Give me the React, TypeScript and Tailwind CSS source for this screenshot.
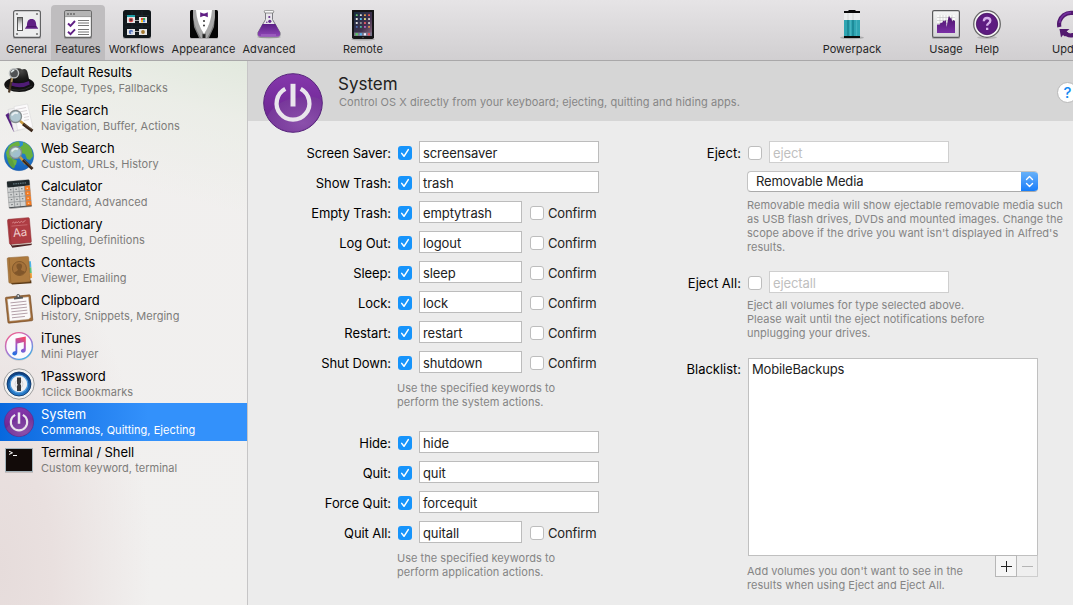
import React, { ReactNode } from "react";

const uiFont = "font-['Inter','Liberation_Sans',sans-serif]";

/* ---------- toolbar icons (28 x 28) ---------- */

const GeneralIcon = () => (
  <svg width="28" height="30" viewBox="0 0 28 30">
    <defs>
      <linearGradient id="gSwitch" x1="0" y1="0" x2="0" y2="1">
        <stop offset="0" stopColor="#777" />
        <stop offset="0.5" stopColor="#ddd" />
        <stop offset="1" stopColor="#fff" />
      </linearGradient>
    </defs>
    <rect x="0" y="26" width="28" height="3" rx="1.5" fill="#000" opacity="0.18" />
    <rect x="0.6" y="0.6" width="26.8" height="26.8" rx="2" fill="#ededee" stroke="#5c5c5e" strokeWidth="1.1" />
    <g fill="#777">
      <circle cx="4" cy="4" r="1.1" />
      <circle cx="24" cy="4" r="1.1" />
      <circle cx="4" cy="24" r="1.1" />
      <circle cx="24" cy="24" r="1.1" />
    </g>
    <rect x="4.5" y="7.5" width="5" height="13" fill="url(#gSwitch)" stroke="#555" />
    <path d="M12 18.8c0-1.5 1.7-1.3 1.9-3 .2-4.5 1.2-6.8 4.7-6.8s4.5 2.3 4.7 6.8c.2 1.7 1.9 1.500 1.9 3z" fill="#602084" />
    <rect x="13.6" y="16" width="9.8" height="1.1" fill="#4b1569" />
  </svg>
);

const FeaturesIcon = () => (
  <svg width="28" height="30" viewBox="0 0 28 30">
    <rect x="0" y="26" width="28" height="3" rx="1.5" fill="#000" opacity="0.18" />
    <rect x="0.6" y="0.6" width="26.8" height="26.8" rx="2" fill="#fff" stroke="#666" strokeWidth="1.1" />
    <path d="M1 6.5V2.5Q1 1 2.5 1h23Q27 1 27 2.5v4z" fill="#b5b5b5" />
    <path d="M1 6.6h26" stroke="#888" strokeWidth="0.8" />
    <g fill="#6a6a6a">
      <circle cx="4" cy="4" r="1" />
      <circle cx="7" cy="4" r="1" />
      <circle cx="10" cy="4" r="1" />
    </g>
    <path d="M4 13.5l2.5 2.3L11 11M4 21.8l2.5 2.3L11 19.3" fill="none" stroke="#602084" strokeWidth="1.9" />
    <path d="M14 10.500h11M14 13h11M14 15.500h11M14 19.500h11M14 22h11M14 24.500h11" stroke="#666" strokeWidth="0.9" />
  </svg>
);

const WorkflowsIcon = () => (
  <svg width="28" height="30" viewBox="0 0 28 30">
    <rect x="0" y="26" width="28" height="3" rx="1.5" fill="#000" opacity="0.18" />
    <rect x="0" y="0" width="28" height="28" rx="2.5" fill="#11171b" />
    <path d="M2 5.5h24M2 9h24M2 13h24M2 17h24M2 24h24M9 1v26M19 1v26" stroke="#263239" strokeWidth="0.5" />
    <path d="M12 10.5h4M12 21.5h4" stroke="#aaa" />
    <rect x="4" y="5" width="8" height="2" fill="#1e9da7" />
    <rect x="4" y="7" width="8" height="6" fill="#e6e6e6" />
    <rect x="16" y="7" width="8" height="6" fill="#e6e6e6" />
    <rect x="4" y="19" width="8" height="6" fill="#e6e6e6" />
    <rect x="16" y="19" width="8" height="6" fill="#e6e6e6" />
    <circle cx="8" cy="10" r="2.3" fill="#d24b4e" />
    <circle cx="8" cy="10" r="0.9" fill="#333" />
    <path d="M18 8h2v2.200h-2z" fill="#e94335" />
    <path d="M20 8h2.200v2.200H20z" fill="#34a853" />
    <path d="M18 10.200h2v2h-2z" fill="#fbbc05" />
    <path d="M20 10.200h2.200v2H20z" fill="#4285f4" />
    <circle cx="8" cy="22" r="2.2" fill="#5876ba" />
    <circle cx="9" cy="22.700" r="1.2" fill="#c8d3ec" />
    <circle cx="20" cy="22" r="1.9" fill="#a47a32" />
  </svg>
);

const AppearanceIcon = () => (
  <svg width="28" height="30" viewBox="0 0 28 30">
    <rect x="0" y="26" width="28" height="3" rx="1.5" fill="#000" opacity="0.18" />
    <rect width="28" height="28" rx="1.5" fill="#050505" />
    <path d="M4 0h20l1 6-1 11-5 11h-4l-1-5-1 5H9L4 17 3 6z" fill="#7b7b7b" />
    <path d="M3 0h4q0 14 7 24l-.5 4H11Q2 14 3 0zM25 0h-4q0 14-7 24l.5 4H17Q26 14 25 0z" fill="#a8a8a8" />
    <path d="M6 0h16q-1 14-8 24Q7 14 6 0z" fill="#fff" />
    <path d="M12.5 23.500l1.5 1 1.5-1v4.500h-3z" fill="#222" />
    <path d="M10.200 2.300l3 1.300h1.600l3-1.300v5l-3-1.300h-1.600l-3 1.300z" fill="#602084" />
    <circle cx="14" cy="11" r="0.9" fill="#222" />
    <circle cx="14" cy="15.500" r="0.9" fill="#222" />
  </svg>
);

const AdvancedIcon = () => (
  <svg width="28" height="30" viewBox="0 0 28 30">
    <defs>
      <linearGradient id="gFlask" x1="0" y1="0" x2="0" y2="1">
        <stop offset="0" stopColor="#5b1f86" />
        <stop offset="1" stopColor="#9148b8" />
      </linearGradient>
    </defs>
    <ellipse cx="14" cy="27" rx="12" ry="1.5" fill="#000" opacity="0.18" />
    <path d="M10.500 1.500v8L3 22.500Q2 27 6 27h16q4 0 3-4.500L17.500 9.500v-8z" fill="#e9e7ec" stroke="#7d7d82" strokeWidth="1" />
    <path d="M7.600 14h12.800l4.600 8.500q.8 4.300-3 4.300H6q-3.800 0-3-4.300z" fill="url(#gFlask)" />
    <rect x="9.3" y="0.3" width="9.4" height="2.7" rx="1.3" fill="#f5f5f5" stroke="#777" strokeWidth="0.8" />
    <circle cx="14.3" cy="7" r="1.1" fill="#66308d" />
    <circle cx="14.8" cy="11.3" r="1.6" fill="#66308d" />
    <circle cx="11.8" cy="12.3" r="0.8" fill="#66308d" />
    <path d="M6 25h15" stroke="#b581d3" strokeWidth="0.8" />
  </svg>
);

const tabletApps = ["#68c96b", "#e2e2e2", "#e9a34b", "#ef5c54", "#e6e6e6", "#56b9ef", "#e0dc7a", "#ccc", "#ddd", "#8b8c92", "#ea5a68", "#c9c9c9", "#4d6fb3", "#49c3a4", "#c56ad1", "#e8944c"];

const RemoteIcon = () => (
  <svg width="28" height="31" viewBox="0 0 28 31">
    <defs>
      <linearGradient id="gTablet" x1="0" y1="0" x2="1" y2="1">
        <stop offset="0" stopColor="#152a40" />
        <stop offset="0.6" stopColor="#42324f" />
        <stop offset="1" stopColor="#8d6c80" />
      </linearGradient>
    </defs>
    <ellipse cx="14" cy="29.300" rx="12" ry="1.3" fill="#000" opacity="0.2" />
    <rect x="3" y="-1" width="22" height="30" rx="1.8" fill="#151517" />
    <rect x="5" y="2" width="18" height="24" fill="url(#gTablet)" />
    {tabletApps.map((c, i) => (
      <rect key={i} x={6.8 + (i % 4) * 4.1} y={4.2 + Math.floor(i / 4) * 3.9} width="1.9" height="1.9" rx="0.5" fill={c} />
    ))}
    <rect x="5" y="22.500" width="18" height="3.500" fill="#77748a" />
    <rect x="6.600" y="23.200" width="2.2" height="2.2" fill="#56d05c" />
    <rect x="10.700" y="23.200" width="2.2" height="2.2" fill="#4fb0f2" />
    <rect x="14.800" y="23.200" width="2.2" height="2.2" fill="#eef" />
    <rect x="18.900" y="23.200" width="2.2" height="2.2" fill="#ee4d58" />
    <circle cx="14" cy="27.500" r="0.8" fill="#555" />
  </svg>
);

const PowerpackIcon = () => (
  <svg width="28" height="30" viewBox="0 0 28 30">
    <ellipse cx="14" cy="27.700" rx="12" ry="1.6" fill="#000" opacity="0.2" />
    <path d="M10.500 0h7v1H22V3H6V1h4.500z" fill="#0b0b0b" />
    <rect x="6" y="3" width="16" height="7" fill="#eceeee" />
    <path d="M10 3v7M15 3v7" stroke="#dcdedd" strokeWidth="1.5" />
    <rect x="6" y="10" width="16" height="16" fill="#2fa5b2" />
    <path d="M10 10v16M15 10v16" stroke="#188391" strokeWidth="1.5" />
    <path d="M12.500 10v16M18.500 10v16" stroke="#46b3bf" strokeWidth="1.2" />
    <path d="M6 26h16v2H6z" fill="#0b0b0b" />
  </svg>
);

const UsageIcon = () => (
  <svg width="28" height="30" viewBox="0 0 28 30">
    <defs>
      <linearGradient id="gUsage" x1="0" y1="0" x2="0" y2="1">
        <stop offset="0" stopColor="#f5f5f5" />
        <stop offset="1" stopColor="#d5d5d7" />
      </linearGradient>
      <linearGradient id="gChart" x1="0" y1="0" x2="0" y2="1">
        <stop offset="0" stopColor="#4a1269" />
        <stop offset="1" stopColor="#7a2fa5" />
      </linearGradient>
    </defs>
    <rect x="0" y="26" width="28" height="3" rx="1.5" fill="#000" opacity="0.18" />
    <rect x="0.6" y="0.6" width="26.800" height="26.800" rx="1.5" fill="url(#gUsage)" stroke="#5a5a5c" strokeWidth="1.200" />
    <rect x="5" y="5" width="18" height="18" rx="1" fill="#fafafa" />
    <path d="M5 7.500h18M5 10.500h18M5 13.500h18M8 5v9M11 5v9M14 5v9M17 5v9M20 5v9" stroke="#b5b5b5" strokeWidth="0.500" />
    <path d="M5 15l1-1 1 1 2-2.500 1 .5 1.500-2.500 1 1 .5-1.500 1 1 .7 6 .8-5 1-5 .7-1 1 2.500 1-1 1 4 1-1.500 1.800 1V23H5z" fill="url(#gChart)" />
  </svg>
);

const HelpIcon = () => (
  <svg width="28" height="30" viewBox="0 0 28 30">
    <ellipse cx="14" cy="27.500" rx="10" ry="1.500" fill="#000" opacity="0.15" />
    <circle cx="14" cy="14" r="13.300" fill="#f5f5f5" stroke="#666" strokeWidth="1.300" />
    <circle cx="14" cy="14" r="10.700" fill="#5d1c80" stroke="#451060" strokeWidth="0.800" />
    <path d="M10.800 11.200q.2-3.200 3.300-3.200 3.200 0 3.200 2.800 0 1.500-1.700 2.600-1.500 1-1.500 2.400" fill="none" stroke="#d6b2ea" strokeWidth="2.300" />
    <rect x="13" y="17.700" width="2.300" height="2.300" fill="#d6b2ea" />
  </svg>
);

const UpdateIcon = () => (
  <svg width="28" height="30" viewBox="0 0 28 30">
    <path d="M2.400 17A12 12 0 0 1 2.400 11.500 12 12 0 0 1 14 2.800a12 12 0 0 1 9 4" fill="none" stroke="#52196f" strokeWidth="4.200" />
    <path d="M24 11A12 12 0 0 1 14 25.500a12 12 0 0 1-7.500-3.500" fill="none" stroke="#52196f" strokeWidth="4.200" />
    <path d="M2.500 19h10L9.500 21.500l2 1.500-3.500 3.500L6 25l-2 2.500z" fill="#52196f" />
    <path d="M25 9.500h-8.500L22.500 2z" fill="#52196f" />
    <path d="M2.500 13A11.500 11.500 0 0 1 14 2.500" fill="none" stroke="#7531a0" strokeWidth="1.600" />
  </svg>
);

/* ---------- sidebar icons (32 x 32) ---------- */

const Lens = ({ x, y, r }: { x: number; y: number; r: number }) => (
  <g>
    <path d={`M${x + r * 0.7} ${y + r * 0.7}L23 24`} stroke="#c99a3f" strokeWidth="2.6" />
    <path d={`M${x + r + 1.5} ${y + r + 1.5}L29.5 29`} stroke="#38251a" strokeWidth="3" />
    <path d={`M${x + r + 2} ${y + r + 1}L29.5 27.800`} stroke="#80654a" strokeWidth="0.7" />
    <circle cx={x} cy={y} r={r} fill="#abc4ce" fillOpacity="0.92" stroke="#848c8f" strokeWidth="1.3" />
    <path d={`M${x - r * 0.6} ${y - 1}a${r * 0.7} ${r * 0.7} 0 0 1 ${r} ${-r * 0.35}`} stroke="#fff" strokeWidth="2" fill="none" opacity="0.7" />
  </g>
);

const HatIcon = () => (
  <svg width="32" height="32" viewBox="0 0 32 32">
    <defs>
      <radialGradient id="gHat" cx="0.55" cy="0.15" r="0.8">
        <stop offset="0" stopColor="#4a4a48" />
        <stop offset="0.5" stopColor="#1e1e1d" />
        <stop offset="1" stopColor="#080808" />
      </radialGradient>
    </defs>
    <ellipse cx="16.300" cy="20.500" rx="15" ry="7.500" fill="#121212" />
    <path d="M7.500 20Q7.500 6 12 5q4-1.500 7 .5 5-2 6 5l2 9.500q-9 5-19.500 0z" fill="url(#gHat)" />
    <path d="M8 18q9 3 18-1l.8 3.500q-9 5-18.800 1z" fill="#4f1c75" />
    <path d="M3 23q13 7 26-1" stroke="#333" fill="none" strokeWidth="0.800" />
    <path d="M9 14L6 28.500" stroke="#4b3826" strokeWidth="2.200" />
    <path d="M9.300 14L8.500 18" stroke="#a98d5c" strokeWidth="1.800" />
    <circle cx="11" cy="9.300" r="4.600" fill="#4f5254" stroke="#bfc3c3" strokeWidth="1.400" />
    <path d="M8.300 8.300a4 4 0 0 1 3-2" stroke="#e5eeee" strokeWidth="1.400" fill="none" />
  </svg>
);

const FileSearchIcon = () => (
  <svg width="32" height="32" viewBox="0 0 32 32">
    <path d="M2.500 13l4-3 9 18-5 1.500z" fill="#552080" />
    <path d="M5 7.500l16-3.500 4 22-14 3.500z" fill="#f1f0f1" stroke="#d5d5d5" strokeWidth="0.600" />
    <path d="M11 4.500l13.500-2.500L29.800 25l-15.300 3z" fill="#fbfafb" stroke="#dadada" strokeWidth="0.600" />
    <path d="M13 7.500l10-2M13.500 10.500l10.500-2M20 12.500l5-1M21 15.500l5-1M21 18.500l5-1" stroke="#d2cccf" strokeWidth="0.800" />
    <Lens x={12.5} y={14.5} r={6} />
  </svg>
);

const WebSearchIcon = () => (
  <svg width="32" height="32" viewBox="0 0 32 32">
    <defs>
      <linearGradient id="gSea" x1="0" y1="0" x2="0" y2="1">
        <stop offset="0" stopColor="#2f95cf" />
        <stop offset="1" stopColor="#1560bd" />
      </linearGradient>
    </defs>
    <circle cx="16" cy="16" r="14.700" fill="url(#gSea)" stroke="#2661a3" strokeWidth="0.500" />
    <path d="M6 6q5-4.500 10-4.500l1 4-4 2 2 3-5 3-1 5 5 2-1 4-3 3-3-5-3-5-1-5z" fill="#6bb13f" />
    <path d="M20 2q6 2 8.500 7l1.500 7-3 4-3-1-2-5-5-1-1-5 4-3z" fill="#69b03e" />
    <path d="M4 17l5 2 3 8-2 1.500Q5 25 4 17z" fill="#5ca03d" />
    <Lens x={12.5} y={12.5} r={6} />
  </svg>
);

const CalculatorIcon = () => (
  <svg width="32" height="32" viewBox="0 0 32 32">
    <path d="M7 30l20-2 2-2v2.500l-21 2.500z" fill="#000" opacity="0.2" />
    <g transform="rotate(-5 16 16)">
      <rect x="5" y="2.500" width="22.500" height="27" rx="1" fill="#d0d2d2" stroke="#777" strokeWidth="0.400" />
      <rect x="5" y="2.500" width="22.500" height="6" rx="1" fill="#20282b" />
      <path d="M11 5.500h13" stroke="#5d7178" strokeWidth="1.400" strokeDasharray="1.500 0.800" />
      <rect x="22" y="8.500" width="5.500" height="20.500" fill="#f47a20" />
      <path d="M5 13.500h22.500M5 18.500h22.500M5 23.500h22.500M10.700 8.500v20.500M16.400 8.500v20.500M22 8.500v20.500" stroke="#8d9193" strokeWidth="0.700" />
      <path d="M5 28.800h22.500" stroke="#494d50" />
      <path d="M7.300 11h1.500M12.800 11h1.500M18.500 11H20M7.300 16h1.500M12.800 16h1.500M18.500 16H20M7.300 21h1.500M12.800 21h1.500M18.500 21H20M7.300 26h1.500M12.800 26h1.500" stroke="#6b7073" />
      <path d="M24 11h1.500M24 16h1.500M24 21h1.500M24 26h1.500" stroke="#ffd8b7" />
    </g>
  </svg>
);

const DictionaryIcon = () => (
  <svg width="32" height="32" viewBox="0 0 32 32">
    <g transform="rotate(-5 16 16)">
      <path d="M6 27l21.500 1v2L8 31z" fill="#4b2424" />
      <path d="M7 27.300h20.500v1.500H8z" fill="#d8cfc4" />
      <rect x="5.500" y="2.500" width="22" height="25" rx="1.200" fill="#ae3c43" stroke="#8d2c31" strokeWidth="0.500" />
      <path d="M7 2.500v25" stroke="#993036" strokeWidth="0.800" />
      <path d="M9 9.500h16" stroke="#d67f82" strokeWidth="0.600" />
      <path d="M10 6.500l1.500-1 1 1.500 1.500-1.500 1 1.300 1.500-1.300 1 1.300 2-1.300 1 1.300 3-1.800" stroke="#e3a0a1" strokeWidth="0.700" fill="none" />
      <text x="17" y="20.500" textAnchor="middle" fontSize="11.500" fill="#f0cccb" className={uiFont}>Aa</text>
    </g>
  </svg>
);

const ContactsIcon = () => (
  <svg width="32" height="32" viewBox="0 0 32 32">
    <g transform="rotate(-4 16 16)">
      <path d="M26 8h2.500v6H26z" fill="#4eb4e8" />
      <path d="M26 14h2.500v6H26z" fill="#5cc47c" />
      <path d="M26 20h2.500v5H26z" fill="#f2a13b" />
      <path d="M6 27h21.500v3H8z" fill="#573613" />
      <rect x="5" y="3" width="21.500" height="25.500" rx="1.200" fill="#ad7a3e" stroke="#8f6430" strokeWidth="0.500" />
      <path d="M7 3v25" stroke="#96672f" strokeWidth="0.800" />
      <circle cx="16.500" cy="14.500" r="7" fill="#a4713a" stroke="#80562a" strokeWidth="0.900" />
      <path d="M16.500 9.500q3 0 2.800 3-.3 2-1.300 2.800 0 1.200 1.500 1.700 2 .5 2.500 1.700-2.300 2.500-5.500 2.500t-5.500-2.500q.5-1.200 2.500-1.700 1.500-.5 1.500-1.700-1-.8-1.300-2.800-.2-3 2.800-3z" fill="#80562a" />
    </g>
  </svg>
);

const ClipboardIcon = () => (
  <svg width="32" height="32" viewBox="0 0 32 32">
    <g transform="rotate(-6 16 16)">
      <rect x="3.500" y="4" width="25" height="26" rx="1" fill="#a16d3a" stroke="#6f431d" strokeWidth="0.600" />
      <path d="M5.500 6h21v20.500l-2 1.500h-19z" fill="#fbf9f9" stroke="#ccc" strokeWidth="0.400" />
      <path d="M8 10h16M8 13h16M8 16h16M8 19h16M8 22h16M8 25h13" stroke="#a58f99" strokeWidth="0.800" />
      <path d="M12 7V5h2.500q0-3 2-3t2 3H21v2z" fill="#55585a" />
      <circle cx="16.500" cy="4" r="0.900" fill="#ddd" />
    </g>
  </svg>
);

const ITunesIcon = () => (
  <svg width="32" height="32" viewBox="0 0 32 32">
    <defs>
      <linearGradient id="gRing" x1="0.2" y1="0" x2="0.8" y2="1">
        <stop offset="0" stopColor="#f1608e" />
        <stop offset="0.5" stopColor="#a873d7" />
        <stop offset="1" stopColor="#31b5e8" />
      </linearGradient>
      <linearGradient id="gNote" x1="0.7" y1="0" x2="0.4" y2="1">
        <stop offset="0" stopColor="#f54766" />
        <stop offset="0.55" stopColor="#9a55cc" />
        <stop offset="1" stopColor="#2870e0" />
      </linearGradient>
    </defs>
    <circle cx="16" cy="16.500" r="14.300" fill="#000" opacity="0.120" />
    <circle cx="16" cy="16" r="13.400" fill="#fbfafd" stroke="url(#gRing)" strokeWidth="1.400" />
    <path d="M12.500 8.500L22.800 6.400V19.600q0 3.200-3 3.200-2.200-.2-1.900-2.200.3-1.600 2.900-2V12l-6.500 1.400v8.800q0 3-3 3.200-2.300-.2-2-2.200.3-1.700 3.200-2.200z" fill="url(#gNote)" />
  </svg>
);

const OnePasswordIcon = () => (
  <svg width="32" height="32" viewBox="0 0 32 32">
    <defs>
      <linearGradient id="gLock" x1="0" y1="0" x2="0" y2="1">
        <stop offset="0" stopColor="#0b3e80" />
        <stop offset="1" stopColor="#277fce" />
      </linearGradient>
    </defs>
    <circle cx="16" cy="16" r="15.200" fill="#f2f2f2" stroke="#888" strokeWidth="0.800" />
    <circle cx="16" cy="16" r="12" fill="url(#gLock)" stroke="#082c5d" strokeWidth="0.800" />
    <circle cx="16" cy="16" r="8.800" fill="#f0f1f3" stroke="#4f9bdd" strokeWidth="1.200" />
    <circle cx="16" cy="16" r="4" fill="none" stroke="#ccc" strokeWidth="0.700" />
    <path d="M14 9.500h4v5.300l-.8 1.200.8 1v6h-4v-5l.8-1.200-.8-1z" fill="#39393b" />
  </svg>
);

const PowerIcon = ({ size }: { size: number }) => (
  <svg width={size} height={size} viewBox="0 0 60 60">
    <defs>
      <linearGradient id="gPower" x1="0" y1="0" x2="0" y2="1">
        <stop offset="0" stopColor="#8537ac" />
        <stop offset="1" stopColor="#65208a" />
      </linearGradient>
      <radialGradient id="gSheen" cx="0.65" cy="0.75" r="0.7">
        <stop offset="0" stopColor="#935bb2" />
        <stop offset="1" stopColor="#783b9a" />
      </radialGradient>
    </defs>
    <circle cx="30" cy="30" r="29.300" fill="url(#gPower)" stroke="#57267b" strokeWidth="1" />
    <path d="M4.500 43Q13 27 36 24.500T58.500 30A28.500 28.500 0 0 1 4.500 43z" fill="url(#gSheen)" opacity="0.8" />
    <path d="M22.300 15.800A16.400 16.400 0 1 0 37.700 15.800" fill="none" stroke="#e9e5ec" strokeWidth="4.300" />
    <path d="M30 10.800v22.700" stroke="#e9e5ec" strokeWidth="5" />
  </svg>
);

const TerminalIcon = () => (
  <svg width="32" height="32" viewBox="0 0 32 32">
    <rect x="2" y="5" width="28" height="24" fill="#000" opacity="0.15" />
    <rect x="2.500" y="4.500" width="27" height="23" fill="#120b09" stroke="#a4b4bb" strokeWidth="1" />
    <path d="M6 7.200l3.500 1.600L6 10.400M10 11.500h4" stroke="#fff" strokeWidth="1" fill="none" />
  </svg>
);

/* ---------- controls ---------- */

const Tool = ({ label, icon, className }: { label: string; icon: ReactNode; className: string }) => (
  <div className={`flex shrink-0 flex-col items-center pt-[5px] ${className}`}>
    <div className="h-[33px] shrink-0">{icon}</div>
    <div className="whitespace-nowrap text-[11px] leading-[13px] tracking-[0.05px] text-[#262626]">{label}</div>
  </div>
);

const Check = ({ on = false }: { on?: boolean }) =>
  on ? (
    <span className="flex size-[14px] shrink-0 items-center justify-center rounded-[3px] bg-[#1694fb]">
      <svg width="14" height="14" viewBox="0 0 14 14">
        <path d="M3.700 7.400l2.300 2.900L10.300 3.600" fill="none" stroke="#fff" strokeWidth="1.500" strokeLinecap="round" strokeLinejoin="round" />
      </svg>
    </span>
  ) : (
    <span className="size-[14px] shrink-0 rounded-[3px] border border-[#bdbdbd] bg-white" />
  );

const Label = ({ children, className }: { children: ReactNode; className: string }) => (
  <span className={`shrink-0 whitespace-nowrap text-right text-[13px] leading-[16px] text-black ${className}`}>{children}</span>
);

type Row = { label: string; value: string; confirm?: boolean };

const KeywordRow = ({ label, value, confirm }: Row) => (
  <div className="flex h-[22px] items-center">
    <Label className="w-[143px] pt-[2px] tracking-[-0.08px]">{label}</Label>
    <span className="ml-[7px] flex pt-px">
      <Check on />
    </span>
    <span className={`ml-[7px] flex h-[22px] items-center border border-[#bcbcbc] bg-white px-[3px] pt-[2px] text-[13px] leading-[16px] tracking-[-0.1px] text-[#222] ${confirm ? "w-[103px]" : "w-[180px]"}`}>{value}</span>
    {confirm && (
      <span className="ml-2 flex items-center gap-1 pt-px">
        <Check />
        <span className="text-[13px] leading-[16px] tracking-[-0.15px] text-[#222]">Confirm</span>
      </span>
    )}
  </div>
);

const EjectRow = ({ label, value }: Row) => (
  <div className="flex h-[22px] items-center">
    <Label className="w-[93px] pt-[2px] tracking-[0.03px]">{label}</Label>
    <span className="ml-[7px] flex pt-px">
      <Check />
    </span>
    <span className="ml-[7px] flex h-[22px] w-[180px] items-center border border-[#cfcfcf] bg-white px-[3px] pt-[2px] text-[13px] leading-[16px] tracking-[-0.1px] text-[#bfbfbf]">{value}</span>
  </div>
);

const Hint = ({ lines, className }: { lines: string[]; className: string }) => (
  <div className={`whitespace-nowrap text-[11px] leading-[14px] tracking-[0.03px] text-[#858585] ${className}`}>
    {lines.map((line) => (
      <div key={line}>{line}</div>
    ))}
  </div>
);

const features: { title: string; sub: string; icon: ReactNode; active?: boolean }[] = [
  { title: "Default Results", sub: "Scope, Types, Fallbacks", icon: <HatIcon /> },
  { title: "File Search", sub: "Navigation, Buffer, Actions", icon: <FileSearchIcon /> },
  { title: "Web Search", sub: "Custom, URLs, History", icon: <WebSearchIcon /> },
  { title: "Calculator", sub: "Standard, Advanced", icon: <CalculatorIcon /> },
  { title: "Dictionary", sub: "Spelling, Definitions", icon: <DictionaryIcon /> },
  { title: "Contacts", sub: "Viewer, Emailing", icon: <ContactsIcon /> },
  { title: "Clipboard", sub: "History, Snippets, Merging", icon: <ClipboardIcon /> },
  { title: "iTunes", sub: "Mini Player", icon: <ITunesIcon /> },
  { title: "1Password", sub: "1Click Bookmarks", icon: <OnePasswordIcon /> },
  { title: "System", sub: "Commands, Quitting, Ejecting", icon: <PowerIcon size={30} />, active: true },
  { title: "Terminal / Shell", sub: "Custom keyword, terminal", icon: <TerminalIcon /> },
];

const systemRows: Row[] = [
  { label: "Screen Saver:", value: "screensaver" },
  { label: "Show Trash:", value: "trash" },
  { label: "Empty Trash:", value: "emptytrash", confirm: true },
  { label: "Log Out:", value: "logout", confirm: true },
  { label: "Sleep:", value: "sleep", confirm: true },
  { label: "Lock:", value: "lock", confirm: true },
  { label: "Restart:", value: "restart", confirm: true },
  { label: "Shut Down:", value: "shutdown", confirm: true },
];

const appRows: Row[] = [
  { label: "Hide:", value: "hide" },
  { label: "Quit:", value: "quit" },
  { label: "Force Quit:", value: "forcequit" },
  { label: "Quit All:", value: "quitall", confirm: true },
];

export default function App() {
  return (
    <div className={`flex h-[605px] w-[1073px] flex-col overflow-hidden bg-[#ececec] ${uiFont}`}>
      <header className="flex h-[61px] shrink-0 overflow-hidden border-b border-[#a9a8a9] bg-linear-to-b from-[#e6e4e6] to-[#d1cfd1] pt-[5px]">
        <Tool label="General" icon={<GeneralIcon />} className="w-[51px] pl-[2px]" />
        <Tool label="Features" icon={<FeaturesIcon />} className="w-[54px] rounded-t-[4px] bg-[#bfbdbf]" />
        <Tool label="Workflows" icon={<WorkflowsIcon />} className="w-[63px]" />
        <Tool label="Appearance" icon={<AppearanceIcon />} className="w-[71px]" />
        <Tool label="Advanced" icon={<AdvancedIcon />} className="w-[60px]" />
        <Tool label="Remote" icon={<RemoteIcon />} className="ml-[40px] w-[48px]" />
        <Tool label="Powerpack" icon={<PowerpackIcon />} className="ml-[432px] w-[66px]" />
        <Tool label="Usage" icon={<UsageIcon />} className="ml-[40px] w-[42px]" />
        <Tool label="Help" icon={<HelpIcon />} className="ml-1 w-[32px]" />
        <Tool label="Update" icon={<UpdateIcon />} className="ml-[45px] w-[46px]" />
      </header>

      <div className="flex min-h-0 flex-1">
        <aside className="w-[248px] shrink-0 border-r border-[#c6c5c6] bg-[linear-gradient(195deg,#e2e9de_0px,rgba(234,237,230,0.8)_60px,rgba(242,240,238,0)_150px),radial-gradient(ellipse_150px_340px_at_0px_510px,#e6dcdb_0%,#e9e0df_35%,rgba(241,239,238,0)_100%),linear-gradient(#f1efee,#f1f0ef)]">
          {features.map((f) => (
            <div key={f.title} className={`flex h-[38px] items-center ${f.active ? "bg-linear-to-r from-[#0768de] to-[#3391fb] to-60%" : ""}`}>
              <span className="ml-[3px] flex size-8 shrink-0 items-center justify-center">{f.icon}</span>
              <span className="ml-[6px] flex flex-col whitespace-nowrap">
                <span className={`text-[13px] leading-[16px] tracking-[-0.1px] ${f.active ? "text-white" : "text-black"}`}>{f.title}</span>
                <span className={`text-[11px] leading-[16px] tracking-[0.03px] ${f.active ? "text-white" : "text-[#7d7c7a]"}`}>{f.sub}</span>
              </span>
            </div>
          ))}
        </aside>

        <main className="flex min-w-0 flex-1 flex-col">
          <div className="flex h-[60px] shrink-0 bg-[#d6d6d6] pl-[15px] pt-[12px]">
            <span className="size-[60px] shrink-0">
              <PowerIcon size={60} />
            </span>
            <div className="ml-[15px] w-[719px] shrink-0 whitespace-nowrap">
              <div className="text-[17px] leading-[22px] text-[#222]">System</div>
              <div className="pl-px text-[11px] leading-[14px] tracking-[0.065px] text-[#868686]">Control OS X directly from your keyboard; ejecting, quitting and hiding apps.</div>
            </div>
            <span className="mt-[9px] flex size-[21px] shrink-0 items-center justify-center rounded-full border border-[#b9b9b9] bg-white text-[15px] font-medium leading-none text-[#1389f2]">?</span>
          </div>

          <div className="flex pt-5">
            <section className="w-[438px] shrink-0">
              <div className="flex flex-col gap-2">
                {systemRows.map((r) => (
                  <KeywordRow key={r.label} {...r} />
                ))}
              </div>
              <Hint className="ml-[149px] mt-2" lines={["Use the specified keywords to", "perform the system actions."]} />
              <div className="mt-[22px] flex flex-col gap-2">
                {appRows.map((r) => (
                  <KeywordRow key={r.label} {...r} />
                ))}
              </div>
              <Hint className="ml-[149px] mt-2" lines={["Use the specified keywords to", "perform application actions."]} />
            </section>

            <section className="-ml-[38px] shrink-0">
              <EjectRow label="Eject:" value="eject" />
              <div className="ml-[99px] mt-2 flex h-[21px] w-[291px] overflow-hidden rounded-[4px] border border-b-[#aaa] border-l-[#c3c3c3] border-r-0 border-t-[#c3c3c3] bg-white">
                <span className="flex-1 pl-2 pt-px text-[13px] leading-[16px] tracking-[-0.1px] text-[#222]">
                  <span className="tracking-[-0.13px]">Removable Media</span>
                </span>
                <span className="-my-px flex w-[17px] items-center justify-center bg-linear-to-b from-[#6ab3f8] to-[#0a7afa]">
                  <svg width="9" height="13" viewBox="0 0 9 13">
                    <path d="M1.500 4.500l3-3 3 3M1.500 8.500l3 3 3-3" fill="none" stroke="#fff" strokeWidth="1.400" strokeLinecap="round" strokeLinejoin="round" />
                  </svg>
                </span>
              </div>
              <Hint
                className="ml-[99px] mt-[6px]"
                lines={["Removable media will show ejectable removable media such", "as USB flash drives, DVDs and mounted images. Change the", "scope above if the drive you want isn't displayed in Alfred's", "results."]}
              />
              <div className="mt-[17px]">
                <EjectRow label="Eject All:" value="ejectall" />
              </div>
              <Hint className="ml-[99px] mt-[5px]" lines={["Eject all volumes for type selected above.", "Please wait until the eject notifications before", "unplugging your drives."]} />
              <div className="mt-[18px] flex">
                <Label className="w-[93px] pt-[3px] tracking-[-0.02px]">Blacklist:</Label>
                <div className="ml-[7px] h-[198px] w-[290px] border border-[#c0c0c0] bg-white pl-[3px] pt-[2px] text-[13px] leading-[16px] tracking-[-0.15px] text-[#222]">MobileBackups</div>
              </div>
              <div className="flex w-[390px] justify-between">
                <Hint className="ml-[99px] mt-2" lines={["Add volumes you don't want to see in the", "results when using Eject and Eject All."]} />
                <div className="-mt-px flex h-[22px]">
                  <span className="flex w-[22px] items-center justify-center border border-[#b7b7b7] bg-[#f6f6f6]">
                    <svg width="12" height="12" viewBox="0 0 12 12">
                      <path d="M0.500 6.500h11M6 1v11" stroke="#222" strokeWidth="1" shapeRendering="crispEdges" />
                    </svg>
                  </span>
                  <span className="flex w-[21px] items-center justify-center border border-l-0 border-[#cecece] border-t-[#c0c0c0] bg-[#efefef]">
                    <svg width="12" height="12" viewBox="0 0 12 12">
                      <path d="M0.500 6.500h11" stroke="#b5b5b5" strokeWidth="1" shapeRendering="crispEdges" />
                    </svg>
                  </span>
                </div>
              </div>
            </section>
          </div>
        </main>
      </div>
    </div>
  );
}
